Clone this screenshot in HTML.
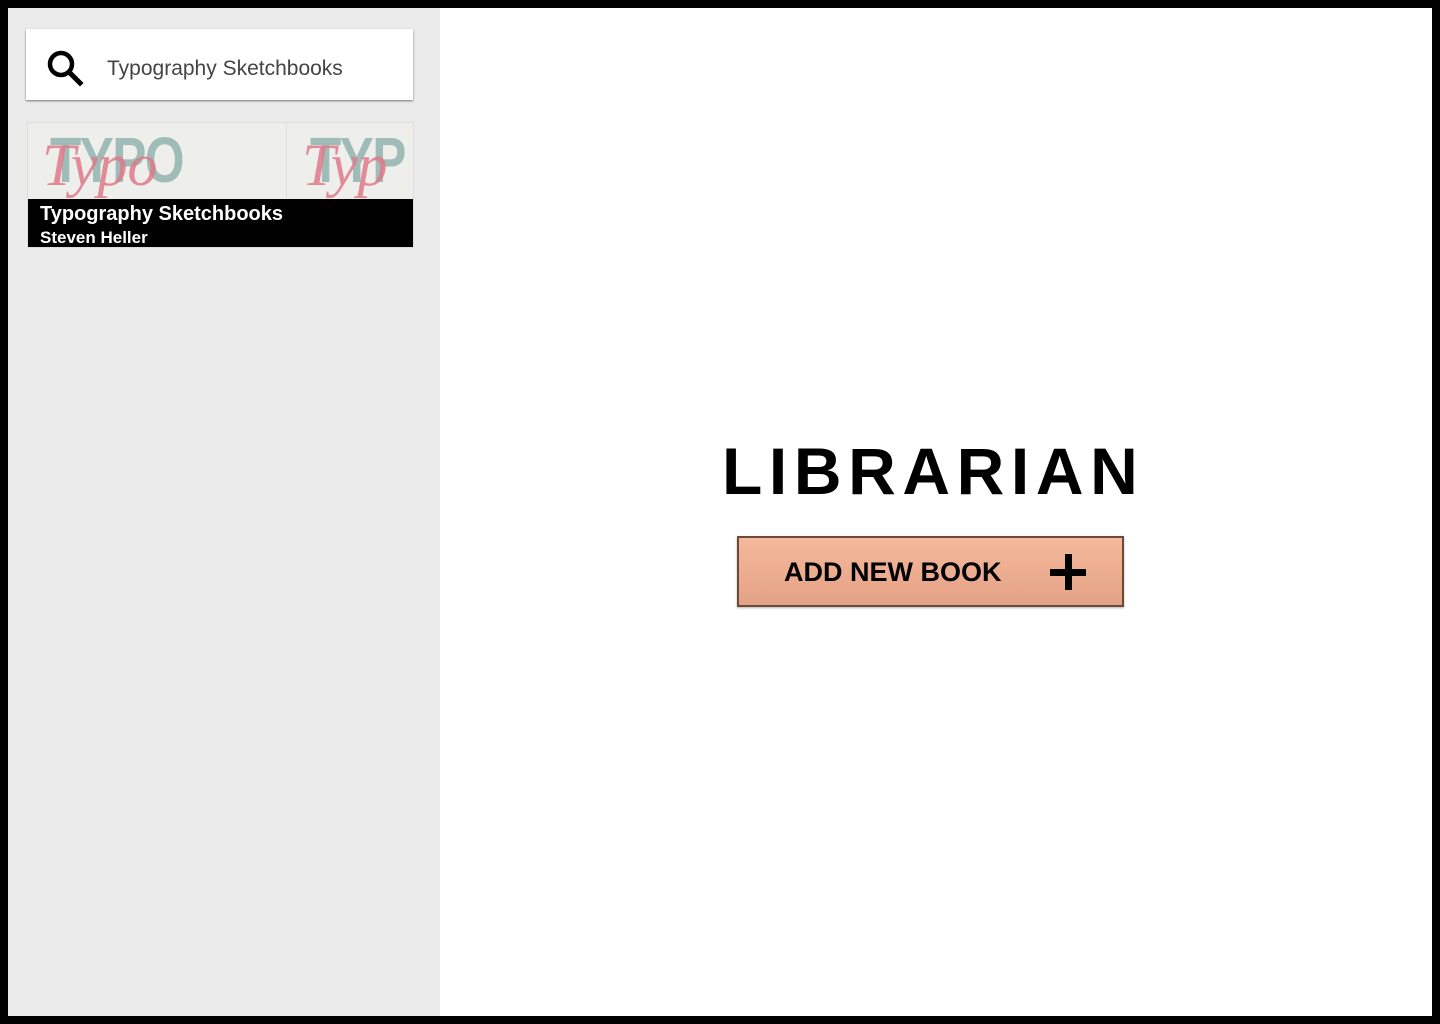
<!DOCTYPE html>
<html><head><style>
*{margin:0;padding:0;box-sizing:border-box}
html,body{width:1440px;height:1024px;background:#000;overflow:hidden;font-family:"Liberation Sans",sans-serif}
#side{position:absolute;left:8px;top:8px;width:432px;height:1008px;background:#ebebeb}
#main{position:absolute;left:440px;top:8px;width:992px;height:1008px;background:#fff}
#search{position:absolute;left:18px;top:21px;width:387px;height:71px;background:#fff;box-shadow:0 1px 2px rgba(0,0,0,.5)}
#search span{position:absolute;left:81px;top:28px;font-size:21px;color:#444}
#card{position:absolute;left:19px;top:114px;width:387px;height:126px;background:#f0f0ec;overflow:hidden;border:1px solid #ddd}
.th{position:absolute;top:0;height:76px;background:#eeefeb;overflow:hidden}
.th .t1{position:absolute;left:22px;top:0;font:bold 64px "Liberation Sans",sans-serif;color:#9fbcb8;letter-spacing:-2px;transform:scaleX(.8);transform-origin:left}
.th .t2{position:absolute;left:14px;top:8px;font:italic 60px "Liberation Serif",serif;color:#e07a8a;opacity:.85}
#cap{position:absolute;left:0;top:76px;width:387px;height:50px;background:#000;color:#fff}
#cap b{position:absolute;left:12px;top:4px;font-size:20px;font-weight:bold}
#cap i{position:absolute;left:12px;top:29px;font-size:17px;font-style:normal;font-weight:bold}
h1{position:absolute;left:282px;top:427px;font-size:66px;font-weight:bold;letter-spacing:6.6px;color:#000;line-height:72px}
#btn{position:absolute;left:297px;top:528px;width:387px;height:71px;border:2px solid #6b4a3a;background:linear-gradient(#f5b99c,#e4a185);box-shadow:0 1px 2px rgba(0,0,0,.3)}
#btn span{position:absolute;left:45px;top:19px;font-size:27px;font-weight:bold;color:#000}
#btn .p1{position:absolute;left:311px;top:31px;width:36px;height:7px;background:#000}
#btn .p2{position:absolute;left:326px;top:16px;width:7px;height:36px;background:#000}
</style></head><body>
<div id="side">
 <div id="search">
  <svg style="position:absolute;left:20px;top:20px" width="38" height="38" viewBox="0 0 38 38"><circle cx="15" cy="15" r="11" fill="none" stroke="#000" stroke-width="4.5"/><line x1="23" y1="23" x2="34" y2="34" stroke="#000" stroke-width="5" stroke-linecap="square"/></svg>
  <span>Typography Sketchbooks</span>
 </div>
 <div id="card">
  <div class="th" style="left:0;width:259px;border-right:1px solid #ddd"><div class="t1">TYPO</div><div class="t2">Typo</div></div>
  <div class="th" style="left:260px;width:127px"><div class="t1">TYP</div><div class="t2">Typ</div></div>
  <div id="cap"><b>Typography Sketchbooks</b><i>Steven Heller</i></div>
 </div>
</div>
<div id="main">
 <h1>LIBRARIAN</h1>
 <div id="btn"><span>ADD NEW BOOK</span><div class="p1"></div><div class="p2"></div></div>
</div>
</body></html>
